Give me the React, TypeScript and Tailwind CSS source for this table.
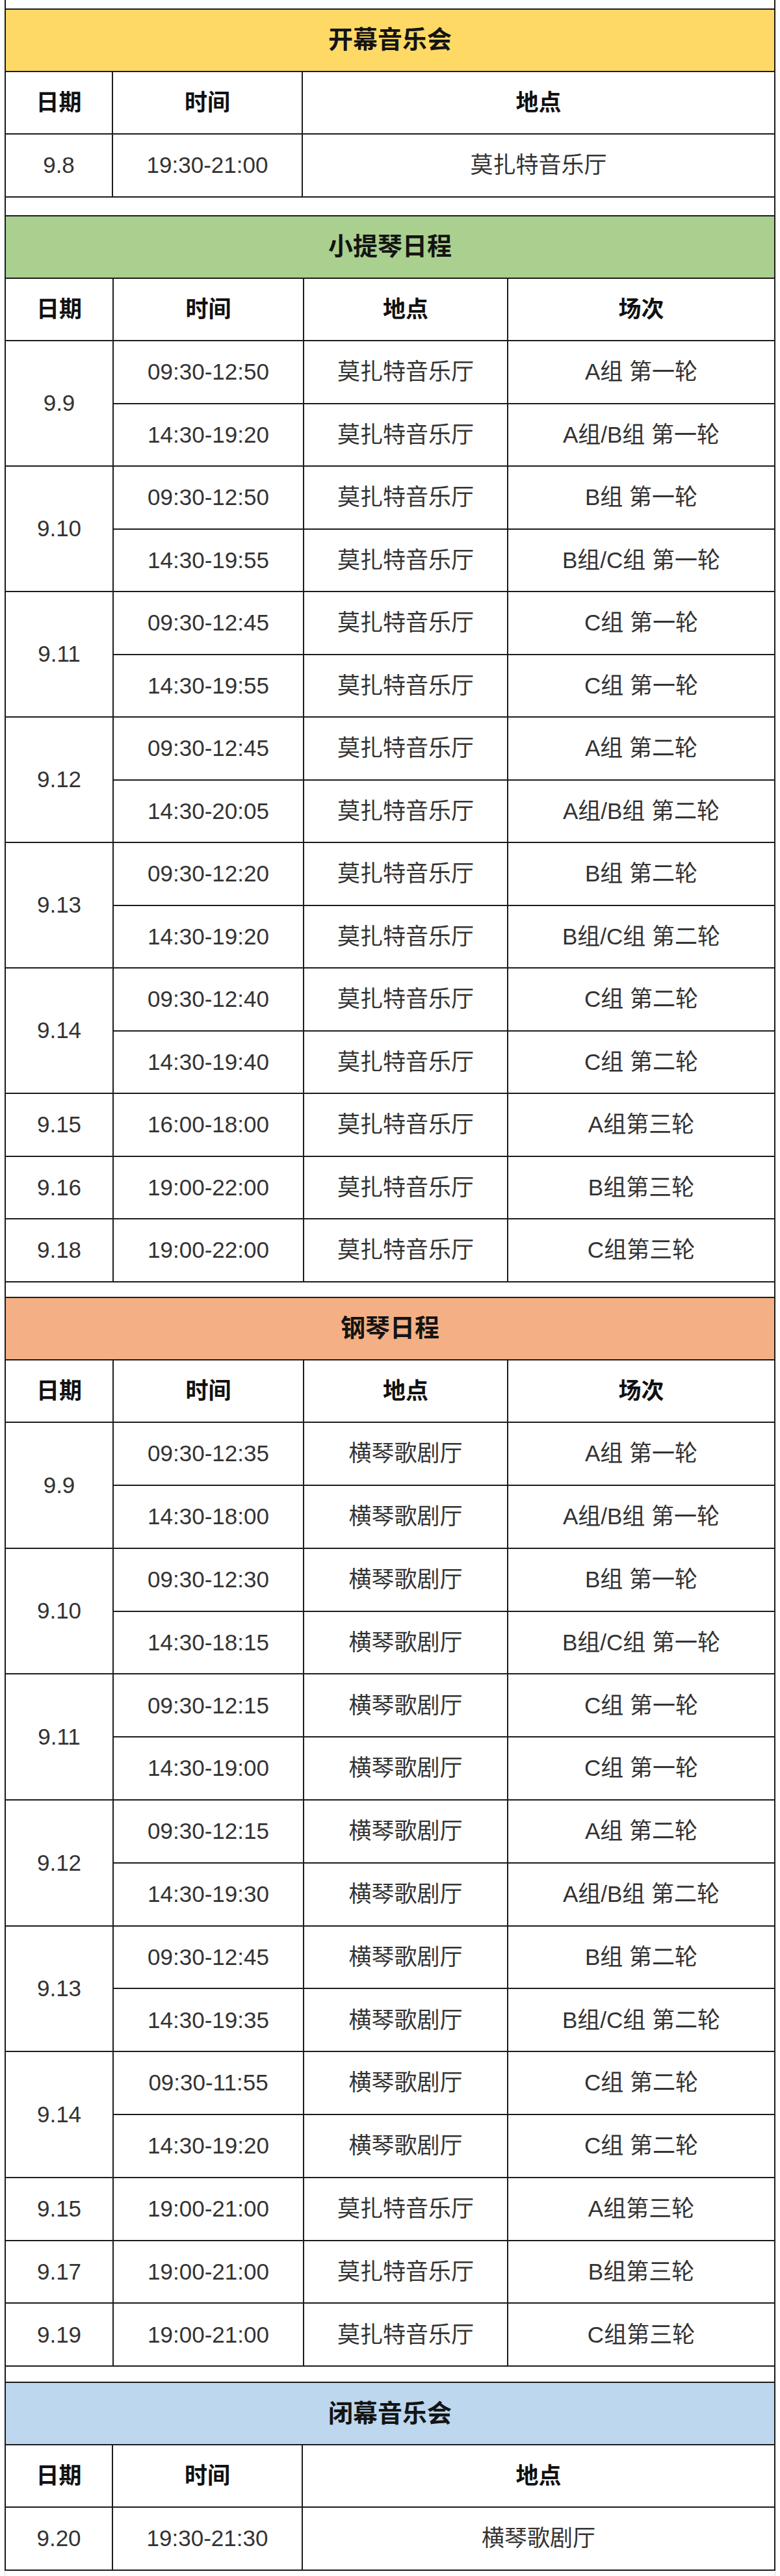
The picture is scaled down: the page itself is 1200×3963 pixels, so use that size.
import React from 'react';

type Slot = { time: string; venue: string; round: string };
type Day = { date: string; slots: Slot[] };

const MOZART = '莫扎特音乐厅';
const HENGQIN = '横琴歌剧厅';

const violinDays: Day[] = [
    { date: '9.9', slots: [
        { time: '09:30-12:50', venue: MOZART, round: 'A组 第一轮' },
        { time: '14:30-19:20', venue: MOZART, round: 'A组/B组 第一轮' },
    ] },
    { date: '9.10', slots: [
        { time: '09:30-12:50', venue: MOZART, round: 'B组 第一轮' },
        { time: '14:30-19:55', venue: MOZART, round: 'B组/C组 第一轮' },
    ] },
    { date: '9.11', slots: [
        { time: '09:30-12:45', venue: MOZART, round: 'C组 第一轮' },
        { time: '14:30-19:55', venue: MOZART, round: 'C组 第一轮' },
    ] },
    { date: '9.12', slots: [
        { time: '09:30-12:45', venue: MOZART, round: 'A组 第二轮' },
        { time: '14:30-20:05', venue: MOZART, round: 'A组/B组 第二轮' },
    ] },
    { date: '9.13', slots: [
        { time: '09:30-12:20', venue: MOZART, round: 'B组 第二轮' },
        { time: '14:30-19:20', venue: MOZART, round: 'B组/C组 第二轮' },
    ] },
    { date: '9.14', slots: [
        { time: '09:30-12:40', venue: MOZART, round: 'C组 第二轮' },
        { time: '14:30-19:40', venue: MOZART, round: 'C组 第二轮' },
    ] },
    { date: '9.15', slots: [{ time: '16:00-18:00', venue: MOZART, round: 'A组第三轮' }] },
    { date: '9.16', slots: [{ time: '19:00-22:00', venue: MOZART, round: 'B组第三轮' }] },
    { date: '9.18', slots: [{ time: '19:00-22:00', venue: MOZART, round: 'C组第三轮' }] },
];

const pianoDays: Day[] = [
    { date: '9.9', slots: [
        { time: '09:30-12:35', venue: HENGQIN, round: 'A组 第一轮' },
        { time: '14:30-18:00', venue: HENGQIN, round: 'A组/B组 第一轮' },
    ] },
    { date: '9.10', slots: [
        { time: '09:30-12:30', venue: HENGQIN, round: 'B组 第一轮' },
        { time: '14:30-18:15', venue: HENGQIN, round: 'B组/C组 第一轮' },
    ] },
    { date: '9.11', slots: [
        { time: '09:30-12:15', venue: HENGQIN, round: 'C组 第一轮' },
        { time: '14:30-19:00', venue: HENGQIN, round: 'C组 第一轮' },
    ] },
    { date: '9.12', slots: [
        { time: '09:30-12:15', venue: HENGQIN, round: 'A组 第二轮' },
        { time: '14:30-19:30', venue: HENGQIN, round: 'A组/B组 第二轮' },
    ] },
    { date: '9.13', slots: [
        { time: '09:30-12:45', venue: HENGQIN, round: 'B组 第二轮' },
        { time: '14:30-19:35', venue: HENGQIN, round: 'B组/C组 第二轮' },
    ] },
    { date: '9.14', slots: [
        { time: '09:30-11:55', venue: HENGQIN, round: 'C组 第二轮' },
        { time: '14:30-19:20', venue: HENGQIN, round: 'C组 第二轮' },
    ] },
    { date: '9.15', slots: [{ time: '19:00-21:00', venue: MOZART, round: 'A组第三轮' }] },
    { date: '9.17', slots: [{ time: '19:00-21:00', venue: MOZART, round: 'B组第三轮' }] },
    { date: '9.19', slots: [{ time: '19:00-21:00', venue: MOZART, round: 'C组第三轮' }] },
];

const cell = 'flex items-center justify-center text-center';
const body = 'text-[35px] text-[#333333]';
const head = 'text-[35px] font-bold text-[#111111]';

function Title({ label, bg }: { label: string; bg: string }) {
    return (
        <div className={`h-[97.5px] border-y-2 border-[#1c1c1c] ${bg} ${cell} text-[38px] font-bold text-[#141414]`}>
            {label}
        </div>
    );
}

// Four-column schedule (violin / piano)
function Schedule({ title, bg, days, rowH }: { title: string; bg: string; days: Day[]; rowH: string }) {
    return (
        <div>
            <Title label={title} bg={bg} />
            <div className={`grid grid-cols-[166px_293px_314px_1fr] ${rowH} border-b-2 border-[#1c1c1c]`}>
                <div className={`${cell} ${head} border-r-2 border-[#1c1c1c]`}>日期</div>
                <div className={`${cell} ${head} border-r-2 border-[#1c1c1c]`}>时间</div>
                <div className={`${cell} ${head} border-r-2 border-[#1c1c1c]`}>地点</div>
                <div className={`${cell} ${head}`}>场次</div>
            </div>
            {days.map((day) => (
                <div key={day.date} className="grid grid-cols-[166px_1fr]">
                    <div className={`${cell} ${body} border-r-2 border-b-2 border-[#1c1c1c]`}>{day.date}</div>
                    <div>
                        {day.slots.map((s) => (
                            <div
                                key={s.time}
                                className={`grid grid-cols-[293px_314px_1fr] ${rowH} border-b-2 border-[#1c1c1c]`}
                            >
                                <div className={`${cell} ${body} border-r-2 border-[#1c1c1c]`}>{s.time}</div>
                                <div className={`${cell} ${body} border-r-2 border-[#1c1c1c]`}>{s.venue}</div>
                                <div className={`${cell} ${body} whitespace-pre`}>{s.round}</div>
                            </div>
                        ))}
                    </div>
                </div>
            ))}
        </div>
    );
}

// Three-column concert block (opening / closing)
function Concert({ title, bg, date, time, venue }: { title: string; bg: string; date: string; time: string; venue: string }) {
    return (
        <div>
            <Title label={title} bg={bg} />
            <div className="grid grid-cols-[165px_292px_1fr] h-[96.5px] border-b-2 border-[#1c1c1c]">
                <div className={`${cell} ${head} border-r-2 border-[#1c1c1c]`}>日期</div>
                <div className={`${cell} ${head} border-r-2 border-[#1c1c1c]`}>时间</div>
                <div className={`${cell} ${head}`}>地点</div>
            </div>
            <div className="grid grid-cols-[165px_292px_1fr] h-[96.5px] border-b-2 border-[#1c1c1c]">
                <div className={`${cell} ${body} border-r-2 border-[#1c1c1c]`}>{date}</div>
                <div className={`${cell} ${body} border-r-2 border-[#1c1c1c]`}>{time}</div>
                <div className={`${cell} ${body}`}>{venue}</div>
            </div>
        </div>
    );
}

export default function App() {
    return (
        <div className="w-[1200px] min-h-[3963px] bg-white font-['Liberation_Sans','Noto_Sans_CJK_SC',sans-serif]">
            <div className="ml-[7px] w-[1186px] border-x-2 border-[#1c1c1c]">
                <div className="h-[13px]" />
                <Concert title="开幕音乐会" bg="bg-[#FFD966]" date="9.8" time="19:30-21:00" venue={MOZART} />
                <div className="h-[27.5px]" />
                <Schedule title="小提琴日程" bg="bg-[#A9D08E]" days={violinDays} rowH="h-[96.5px]" />
                <div className="h-[22.5px]" />
                <Schedule title="钢琴日程" bg="bg-[#F4B084]" days={pianoDays} rowH="h-[96.8px]" />
                <div className="h-[23px]" />
                <Concert title="闭幕音乐会" bg="bg-[#BDD7EE]" date="9.20" time="19:30-21:30" venue={HENGQIN} />
            </div>
            <div className="ml-[7px] w-[1186px] h-[8px] border-x border-[#dddddd]" />
        </div>
    );
}
